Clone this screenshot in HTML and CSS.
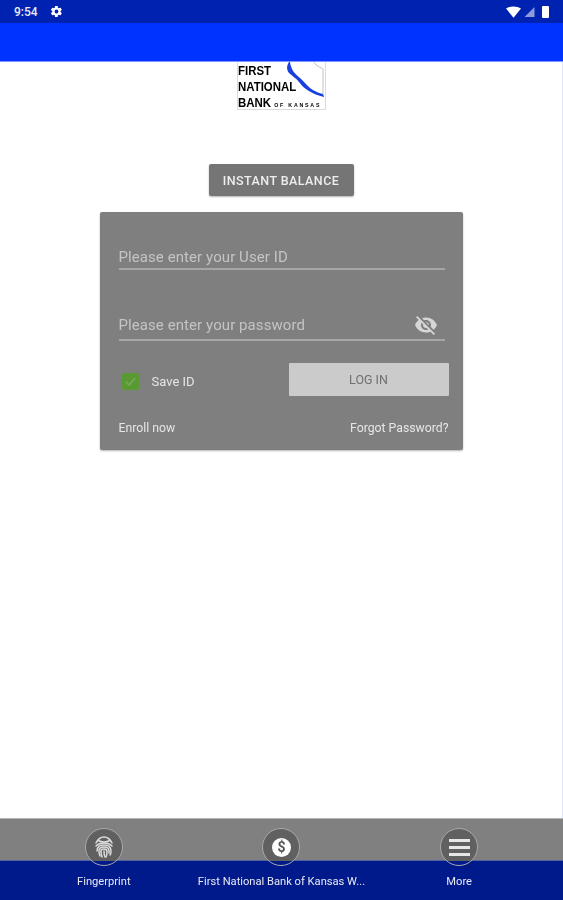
FILE: index.html
```html
<!DOCTYPE html>
<html lang="en">
<head>
    <meta charset="UTF-8">
    <meta name="viewport" content="width=device-width, initial-scale=1.0">
    <title>First National Bank of Kansas</title>
    <link rel="stylesheet" href="styles.css">
</head>
<body>
    <div class="page">
        <div class="status-bar">
            <div class="status-left">
                <span class="clock">9:54</span>
                <svg class="gear" viewBox="0 0 24 24" width="13" height="13"><path fill="#fff" d="M19.4 13c.04-.32.06-.66.06-1s-.02-.68-.07-1l2.16-1.68c.2-.15.25-.42.12-.65l-2.05-3.54c-.12-.22-.39-.3-.62-.22l-2.55 1.02c-.53-.4-1.1-.74-1.73-1l-.38-2.7c-.05-.25-.26-.43-.51-.43h-4.1c-.25 0-.46.18-.5.43l-.39 2.7c-.62.26-1.2.6-1.73 1L4.56 4.91c-.23-.09-.5 0-.62.22L1.89 8.67c-.13.23-.08.5.12.65L4.17 11c-.05.32-.07.66-.07 1s.02.68.07 1l-2.16 1.68c-.2.15-.25.42-.12.65l2.05 3.54c.12.22.39.3.62.22l2.55-1.02c.53.4 1.1.74 1.73 1l.39 2.7c.04.25.25.43.5.43h4.1c.25 0 .46-.18.5-.43l.39-2.7c.62-.26 1.2-.6 1.73-1l2.55 1.02c.23.09.5 0 .62-.22l2.05-3.54c.13-.23.08-.5-.12-.65L19.4 13zM12 15.5a3.5 3.5 0 1 1 0-7 3.5 3.5 0 0 1 0 7z"/></svg>
            </div>
            <div class="status-right">
                <svg viewBox="0 0 16 12" width="15" height="12"><path fill="#fff" d="M0 2.2C2.2.8 5 0 8 0s5.800.8 8 2.200L8 12z"/></svg>
                <svg class="signal" viewBox="0 0 10 10" width="11" height="10"><path fill="#fff" opacity=".55" d="M0 10 10 0v10z"/></svg>
                <div class="battery"></div>
            </div>
        </div>
        <div class="app-bar"></div>

        <div class="content">
            <div class="logo">
                <div class="logo-text">
                    <div>FIRST</div>
                    <div>NATIONAL</div>
                    <div>BANK <small>OF KANSAS</small></div>
                </div>
                <svg class="logo-map" viewBox="0 0 40 38" width="40" height="38">
                    <path fill="none" stroke="#c4c4c4" stroke-width="1" d="M29 0l2 3 7 4v28"/>
                    <path fill="#1a3fe0" d="M4 0C2 3 1 7 4 11c3 3 7 5 10 9 5 7 13 12 25 15l-1-3c-8-2-14-6-18-11C15 15 9 12 7 7 6 4 5 2 5 0z"/>
                </svg>
            </div>

            <div class="instant-btn">INSTANT BALANCE</div>

            <div class="card">
                <div class="field field-first">
                    <span class="placeholder">Please enter your User ID</span>
                </div>
                <div class="field field-pass">
                    <span class="placeholder">Please enter your password</span>
                    <svg class="eye" viewBox="0 0 24 24" width="24" height="24"><path fill="#d6d6d6" d="M12 7c2.760 0 5 2.240 5 5 0 .65-.13 1.260-.36 1.830l2.920 2.920c1.510-1.260 2.700-2.890 3.430-4.750-1.730-4.390-6-7.500-11-7.500-1.400 0-2.740.25-3.980.7l2.160 2.160C10.740 7.130 11.350 7 12 7zM2 4.270l2.280 2.280.46.46C3.080 8.300 1.780 10.020 1 12c1.730 4.390 6 7.500 11 7.500 1.550 0 3.030-.3 4.380-.84l.42.42L19.730 22 21 20.730 3.270 3 2 4.270zM7.530 9.800l1.550 1.550c-.05.21-.08.430-.08.650 0 1.660 1.340 3 3 3 .22 0 .44-.03.65-.08l1.550 1.550c-.67.330-1.410.530-2.200.530-2.760 0-5-2.240-5-5 0-.79.200-1.530.530-2.200zm4.310-.780l3.150 3.150.02-.16c0-1.660-1.340-3-3-3l-.17.010z"/></svg>
                </div>
                <div class="login-row">
                    <div class="save-id">
                        <div class="checkbox">
                            <svg viewBox="0 0 18 18" width="17" height="17"><path fill="none" stroke="#78a85c" stroke-width="1.600" d="M4 9l3.500 3.500L14 5.500"/></svg>
                        </div>
                        <span>Save ID</span>
                    </div>
                    <div class="login-btn">LOG IN</div>
                </div>
                <div class="links">
                    <span>Enroll now</span>
                    <span>Forgot Password?</span>
                </div>
            </div>
        </div>

        <div class="bottom-nav">
            <div class="nav-item">
                <div class="nav-circle">
                    <svg viewBox="0 0 24 24" width="24" height="24" fill="none" stroke="#dcdcdc" stroke-width="1.500" stroke-linecap="round">
                        <path d="M4 8c2-4 5-6 8-6s6 2 8 6"/>
                        <path d="M6 5.500c2 1 4 1.500 6 1.500s4-.5 6-1.500"/>
                        <path d="M4 11c2-2 5-3 8-3s6 1 8 3"/>
                        <path d="M5 16c0-4 3-6 7-6s7 2 7 6c0 2 0 3-1 4"/>
                        <path d="M8 21c-1-2-1-4-1-5 0-3 2-4 5-4s5 1 5 4v2"/>
                        <path d="M10 22c-1-2-1-4-1-6 0-1.500 1-2 3-2s3 1 3 2.500c0 2 0 4-1 5.500"/>
                        <path d="M12 16c0 2 0 4 1 6"/>
                    </svg>
                </div>
                <span class="nav-label">Fingerprint</span>
            </div>
            <div class="nav-item">
                <div class="nav-circle">
                    <div class="dollar">$</div>
                </div>
                <span class="nav-label">First National Bank of Kansas W...</span>
            </div>
            <div class="nav-item">
                <div class="nav-circle">
                    <div class="burger"><i></i><i></i><i></i></div>
                </div>
                <span class="nav-label">More</span>
            </div>
        </div>
    </div>
</body>
</html>
```

FILE: styles.css
```css
html, body { margin: 0; padding: 0; }
body { font-family: Roboto, "Liberation Sans", sans-serif; background: #fff; }
/* the source shot is a soft, upscaled capture */
.page { width: 563px; height: 900px; display: flex; flex-direction: column; overflow: hidden; filter: blur(.4px); }

.status-bar { height: 23px; background: #0022b0; color: #fff; display: flex; justify-content: space-between; align-items: center; padding: 0 14px; flex-shrink: 0; }
.status-left { display: flex; align-items: center; gap: 12px; }
.clock { font-size: 12px; font-weight: 500; color: #e8ecf8; }
.status-right { display: flex; align-items: center; gap: 3px; }
.signal { margin-right: 4px; }
.battery { width: 7px; height: 12px; background: #fff; border-radius: 1px; }

.app-bar { height: 39px; background: #0033ff; border-bottom: 1px solid #7f96ff; flex-shrink: 0; box-sizing: border-box; }

.content { flex: 1; display: flex; flex-direction: column; align-items: center; border-right: 1px solid #dfe5ff; }

.logo { width: 89px; height: 48px; box-sizing: border-box; border: 1px solid #ddd; border-top: none; position: relative; }
.logo-text { font-family: "Liberation Sans", sans-serif; font-weight: bold; font-size: 13px; line-height: 16px; color: #000; padding: 1px 0 0; white-space: nowrap; transform: scaleX(.88); transform-origin: left top; }
.logo-text small { font-size: 6px; letter-spacing: 2px; }
.logo-map { position: absolute; right: 0; top: 0; }

.instant-btn { margin-top: 54px; width: 145px; height: 32px; background: #757575; color: #eee; font-size: 12.500px; font-weight: 500; letter-spacing: .45px; display: flex; align-items: center; justify-content: center; border-radius: 2px; box-shadow: 0 1px 2px rgba(0,0,0,.3); }

.card { margin-top: 16px; width: 363px; height: 238px; box-sizing: border-box; background: #7f7f7f; padding: 0 14px 0 19px; border-radius: 2px; box-shadow: 0 1px 2px rgba(0,0,0,.3); }
.field { width: 326px; height: 34px; box-sizing: border-box; border-bottom: 2px solid #a6a6a6; display: flex; justify-content: space-between; align-items: flex-end; padding-bottom: 2px; }
.field-first { margin-top: 24px; }
.field-pass { margin-top: 37px; padding-bottom: 5px; }
.placeholder { font-size: 15px; line-height: 18px; color: #c4c4c4; letter-spacing: .08px; }
.eye { margin: 0 7px -3px 0; }

.login-row { display: flex; justify-content: space-between; align-items: center; margin-top: 22px; }
.save-id { display: flex; align-items: center; gap: 13px; font-size: 13px; color: #e6e6e6; margin: 3px 0 0 3px; }
.checkbox { width: 17px; height: 17px; background: #5a9a32; border-radius: 2px; }
.login-btn { width: 160px; height: 33px; background: #cbcbcb; color: #707070; font-size: 12.500px; display: flex; align-items: center; justify-content: center; border-radius: 1px; }

.links { display: flex; justify-content: space-between; margin-top: 25px; font-size: 12.250px; color: #e6e6e6; }

.bottom-nav { height: 82px; flex-shrink: 0; box-sizing: border-box; padding: 9px 15px 0; border-top: 1px solid #b5b5b5; background: linear-gradient(#808080 41px, #a0a8c0 41px, #001a8c 42px); display: grid; grid-template-columns: repeat(3, 1fr); }
.nav-item { display: flex; flex-direction: column; align-items: center; gap: 9px; }
.nav-circle { width: 38px; height: 38px; box-sizing: border-box; border: 1px solid #a8a8a8; border-radius: 50%; background: linear-gradient(#606060 32px, #001a8c 32px); display: flex; align-items: center; justify-content: center; }
.nav-label { font-size: 11.150px; color: #e8eaf4; white-space: nowrap; }
.dollar { width: 19px; height: 19px; border-radius: 50%; background: #fff; color: #555; font-size: 14px; font-weight: 700; line-height: 19px; text-align: center; }
.burger { display: flex; flex-direction: column; gap: 4px; }
.burger i { display: block; width: 21px; height: 3px; background: #e6e6e6; }
```
